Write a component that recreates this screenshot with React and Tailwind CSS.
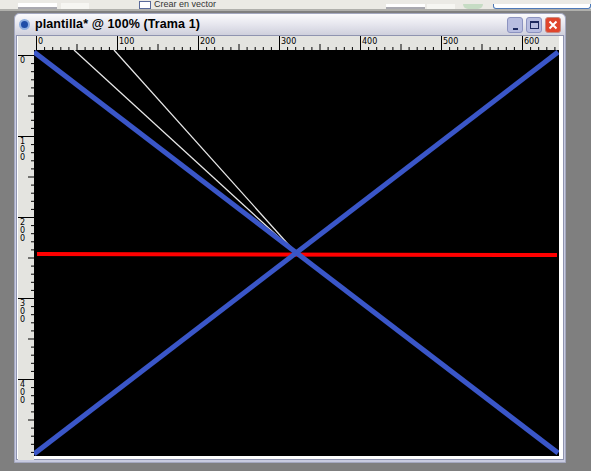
import React from 'react';

const SCALE = 0.81;

const TopRuler = () => {
  const ticks = [];
  for (let u = 0; u <= 640; u += 10) {
    const x = 2 + u * SCALE + 0.5;
    const len = u % 100 === 0 ? 14 : u % 50 === 0 ? 6 : 3;
    ticks.push(<line key={u} x1={x} x2={x} y1={14 - len} y2={14} stroke="#000" strokeWidth="1" />);
  }
  const labels = [0, 100, 200, 300, 400, 500, 600];
  return (
    <svg width="525" height="14" className="block">
      <rect width="525" height="14" fill="#e4e4e0" />
      {ticks}
      {labels.map((l) => (
        <text key={l} x={2 + l * SCALE + 2} y="8" fontSize="8" fontFamily="'DejaVu Sans', sans-serif" fill="#000">
          {l}
        </text>
      ))}
    </svg>
  );
};

const LeftRuler = () => {
  const ticks = [];
  for (let u = 0; u <= 500; u += 10) {
    const y = 5 + u * SCALE + 0.5;
    if (y > 410) break;
    const len = u % 100 === 0 ? 16 : u % 50 === 0 ? 6 : 3;
    ticks.push(<line key={u} x1={16 - len} x2={16} y1={y} y2={y} stroke="#000" strokeWidth="1" />);
  }
  const labels = [0, 100, 200, 300, 400];
  return (
    <svg width="16" height="410" className="block">
      <rect width="16" height="410" fill="#e4e4e0" />
      {ticks}
      {labels.map((l) =>
        String(l).split('').map((d, i) => (
          <text key={l + '-' + i} x="2" y={5 + l * SCALE + 8 + i * 8} fontSize="8" fontFamily="'DejaVu Sans', sans-serif" fill="#000">
            {d}
          </text>
        ))
      )}
    </svg>
  );
};

const Canvas = () => (
  <svg width="525" height="406" className="block">
    <rect width="525" height="406" fill="#000" />
    <line x1="40" y1="0" x2="262" y2="203" stroke="#e8e8e8" strokeWidth="1.3" />
    <line x1="80" y1="0" x2="262" y2="203" stroke="#e8e8e8" strokeWidth="1.3" />
    <line x1="3" y1="204" x2="523" y2="205" stroke="#ff0000" strokeWidth="4" />
    <line x1="0" y1="2" x2="524" y2="403" stroke="#3a56c8" strokeWidth="5" />
    <line x1="0" y1="404" x2="524" y2="2" stroke="#3a56c8" strokeWidth="5" />
  </svg>
);

const WinButton = ({ children, red }) => (
  <div
    className={
      'w-[16px] h-[16px] rounded-[3px] border flex items-center justify-center ' +
      (red ? 'bg-[#e0452c] border-[#c98a80]' : 'bg-[#b8bde0] border-[#8c93c0]')
    }
  >
    {children}
  </div>
);

export default function App() {
  return (
    <div className="w-[591px] h-[471px] bg-[#7f7f7f] overflow-hidden flex flex-col font-['Liberation_Sans',sans-serif]">
      {/* toolbar remnant */}
      <div className="h-[11px] bg-[#ebeae5] border-b-2 border-[#b0b0ac] flex items-end overflow-hidden">
        <div className="ml-[18px] w-[40px] h-[6px] bg-white border-b-2 border-[#a9a9b0]" />
        <div className="ml-[4px] w-[30px] h-[6px] bg-[#f6f6f2]" />
        <div className="ml-[50px] w-[12px] h-[8px] bg-white border border-[#5a6a9a]" />
        <span className="ml-[3px] text-[9px] leading-[9px] whitespace-nowrap text-[#333]">Crear en vector</span>
        <div className="ml-[170px] w-[40px] h-[5px] bg-white border-b-2 border-[#a9a9b0]" />
        <div className="ml-[2px] w-[30px] h-[5px] bg-[#f6f6f2]" />
        <div className="ml-[8px] w-[20px] h-[5px] bg-[#c6dcc4] rounded-b-full" />
        <div className="ml-[10px] w-[102px] h-[5px] bg-white border border-t-0 border-[#4e7ab8] rounded-b-[3px]" />
      </div>
      {/* document window */}
      <div className="mt-[2px] ml-[14px] w-[552px] h-[450px] bg-[#c8cbe0] border border-[#a4a8c0] rounded-t-[5px] flex flex-col">
        <div className="h-[21px] px-[4px] flex items-center bg-gradient-to-b from-[#fbfbfd] via-[#e6e6ee] to-[#cfd0dc] rounded-t-[5px]">
          <div className="w-[11px] h-[11px] rounded-full bg-[#1e4ea8] border-2 border-[#8fb0e0] mr-[5px]" />
          <span className="text-[12.5px] font-bold text-black tracking-[0.1px]">plantilla* @ 100% (Trama 1)</span>
          <div className="ml-auto flex gap-[3px] mt-[1px]">
            <WinButton>
              <div className="w-[5px] h-[2px] bg-[#1e2a60] mt-[7px]" />
            </WinButton>
            <WinButton>
              <div className="w-[9px] h-[8px] border border-t-2 border-[#1e2a60]" />
            </WinButton>
            <WinButton red>
              <svg width="10" height="10" viewBox="0 0 10 10">
                <path d="M1.5 1.5 L8.5 8.5 M8.5 1.5 L1.5 8.5" stroke="#fff" strokeWidth="2" />
              </svg>
            </WinButton>
          </div>
        </div>
        <div className="flex-1 bg-white mx-[1px] mb-[2px] pl-[1px] pr-[4px] pb-[3px] border border-[#8f94b0]">
          <div className="grid grid-cols-[16px_525px] grid-rows-[14px_406px]">
            <div className="bg-[#e4e4e0]" />
            <TopRuler />
            <div className="h-[410px]">
              <LeftRuler />
            </div>
            <Canvas />
          </div>
        </div>
      </div>
    </div>
  );
}
